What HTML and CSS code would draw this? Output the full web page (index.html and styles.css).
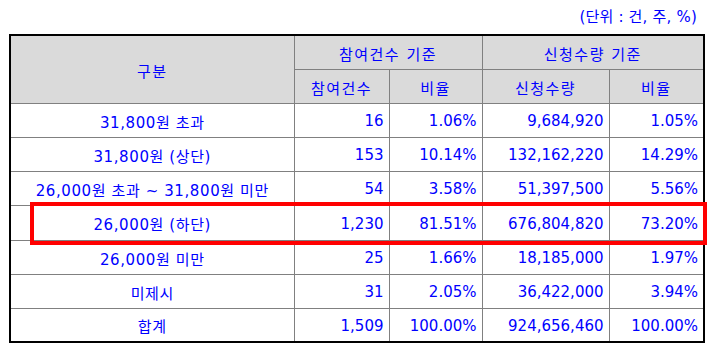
FILE: index.html
```html
<!DOCTYPE html>
<html lang="ko">
<head>
<meta charset="utf-8">
<title>수요예측 결과</title>
<link rel="stylesheet" href="styles.css">
</head>
<body>
<div class="page">
  <div class="unit">(단위 : 건, 주, %)</div>
  <table class="grid">
    <colgroup>
      <col class="c-label">
      <col class="c-cnt">
      <col class="c-rate">
      <col class="c-qty">
      <col class="c-rate2">
    </colgroup>
    <thead>
      <tr>
        <th rowspan="2">구분</th>
        <th colspan="2">참여건수 기준</th>
        <th colspan="2">신청수량 기준</th>
      </tr>
      <tr>
        <th>참여건수</th>
        <th>비율</th>
        <th>신청수량</th>
        <th>비율</th>
      </tr>
    </thead>
    <tbody>
      <tr>
        <td class="label">31,800원 초과</td>
        <td class="num">16</td>
        <td class="num">1.06%</td>
        <td class="num">9,684,920</td>
        <td class="num">1.05%</td>
      </tr>
      <tr>
        <td class="label">31,800원 (상단)</td>
        <td class="num">153</td>
        <td class="num">10.14%</td>
        <td class="num">132,162,220</td>
        <td class="num">14.29%</td>
      </tr>
      <tr>
        <td class="label">26,000원 초과 ~ 31,800원 미만</td>
        <td class="num">54</td>
        <td class="num">3.58%</td>
        <td class="num">51,397,500</td>
        <td class="num">5.56%</td>
      </tr>
      <tr class="tall">
        <td class="label">26,000원 (하단)</td>
        <td class="num">1,230</td>
        <td class="num">81.51%</td>
        <td class="num">676,804,820</td>
        <td class="num">73.20%</td>
      </tr>
      <tr>
        <td class="label">26,000원 미만</td>
        <td class="num">25</td>
        <td class="num">1.66%</td>
        <td class="num">18,185,000</td>
        <td class="num">1.97%</td>
      </tr>
      <tr>
        <td class="label">미제시</td>
        <td class="num">31</td>
        <td class="num">2.05%</td>
        <td class="num">36,422,000</td>
        <td class="num">3.94%</td>
      </tr>
      <tr>
        <td class="label">합계</td>
        <td class="num">1,509</td>
        <td class="num">100.00%</td>
        <td class="num">924,656,460</td>
        <td class="num">100.00%</td>
      </tr>
    </tbody>
  </table>
  <div class="highlight"></div>
</div>
</body>
</html>
```

FILE: styles.css
```css
html, body {
  margin: 0;
  padding: 0;
  background: #ffffff;
}

body {
  font-family: "DejaVu Sans", "Noto Sans CJK KR", sans-serif;
  font-size: 15px;
  color: #0000ff;
}

.page {
  position: relative;
  width: 711px;
  height: 350px;
  padding-left: 9px;
  box-sizing: border-box;
}

.unit {
  height: 34px;
  line-height: 34px;
  text-align: right;
  padding-right: 14px;
  letter-spacing: 0.2px;
}

.grid {
  border-collapse: collapse;
  table-layout: fixed;
  width: 696px;
  border: 2px solid #000000;
}

.c-label { width: 284px; }
.c-cnt { width: 95px; }
.c-rate { width: 93px; }
.c-qty { width: 127px; }
.c-rate2 { width: 95px; }

.grid th,
.grid td {
  border: 1px solid #808080;
  height: 34px;
  padding: 2px 5px 0 5px;
  box-sizing: border-box;
  vertical-align: middle;
  white-space: nowrap;
}

.grid th {
  background: #dadada;
  font-weight: normal;
  text-align: center;
  letter-spacing: 1.5px;
}

.grid td.label {
  text-align: center;
  letter-spacing: 0.6px;
}

.grid td.num {
  text-align: right;
}

.grid tr.tall td {
  height: 35px;
}

.highlight {
  position: absolute;
  left: 30px;
  top: 202px;
  width: 677px;
  height: 43px;
  border: 4px solid #ff0000;
  box-sizing: border-box;
  pointer-events: none;
}
```
